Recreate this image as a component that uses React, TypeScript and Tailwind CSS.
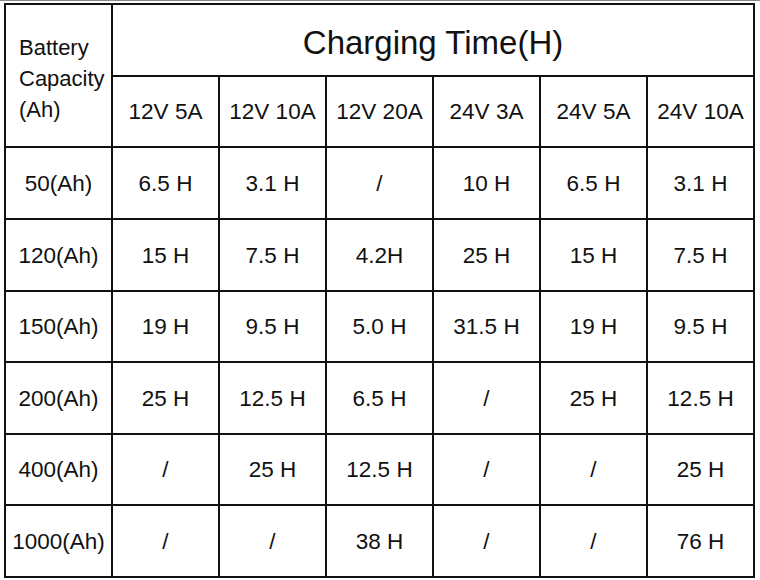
const cols = ['12V 5A', '12V 10A', '12V 20A', '24V 3A', '24V 5A', '24V 10A'];

const rows: { cap: string; h: string; vals: string[] }[] = [
  { cap: '50(Ah)', h: 'h-[72px]', vals: ['6.5 H', '3.1 H', '/', '10 H', '6.5 H', '3.1 H'] },
  { cap: '120(Ah)', h: 'h-[72px]', vals: ['15 H', '7.5 H', '4.2H', '25 H', '15 H', '7.5 H'] },
  { cap: '150(Ah)', h: 'h-[71px]', vals: ['19 H', '9.5 H', '5.0 H', '31.5 H', '19 H', '9.5 H'] },
  { cap: '200(Ah)', h: 'h-[72px]', vals: ['25 H', '12.5 H', '6.5 H', '/', '25 H', '12.5 H'] },
  { cap: '400(Ah)', h: 'h-[71px]', vals: ['/', '25 H', '12.5 H', '/', '/', '25 H'] },
  { cap: '1000(Ah)', h: 'h-[72px]', vals: ['/', '/', '38 H', '/', '/', '76 H'] },
];

const cell = 'border-2 border-[#111] text-center align-middle p-0';

export default function App() {
  return (
    <div className="w-[760px] h-[580px] bg-white overflow-hidden border-t border-[#8a8a8a] font-['Liberation_Sans',Arial,sans-serif] text-[#111]">
      <div className="pt-[2px] pl-[4px]">
        <table className="table-fixed border-collapse w-[749px] text-[22.5px] leading-[31px]">
          <colgroup>
            <col className="w-[107px]" />
            <col className="w-[107px]" />
            <col className="w-[107px]" />
            <col className="w-[107px]" />
            <col className="w-[107px]" />
            <col className="w-[107px]" />
            <col className="w-[107px]" />
          </colgroup>
          <tbody>
            <tr className="h-[72px]">
              <td rowSpan={2} className="border-2 border-[#111] text-left align-middle pl-[13px] pt-[6px] text-[22px]">
                Battery
                <br />
                Capacity
                <br />
                (Ah)
              </td>
              <td colSpan={6} className={`${cell} text-[33px] pt-[4px]`}>
                Charging Time(H)
              </td>
            </tr>
            <tr className="h-[71px]">
              {cols.map((c) => (
                <td key={c} className={`${cell} whitespace-nowrap`}>
                  {c}
                </td>
              ))}
            </tr>
            {rows.map((r) => (
              <tr key={r.cap} className={r.h}>
                <td className={`${cell} whitespace-nowrap`}>{r.cap}</td>
                {r.vals.map((v, i) => (
                  <td key={i} className={`${cell} whitespace-nowrap`}>
                    {v}
                  </td>
                ))}
              </tr>
            ))}
          </tbody>
        </table>
      </div>
    </div>
  );
}
